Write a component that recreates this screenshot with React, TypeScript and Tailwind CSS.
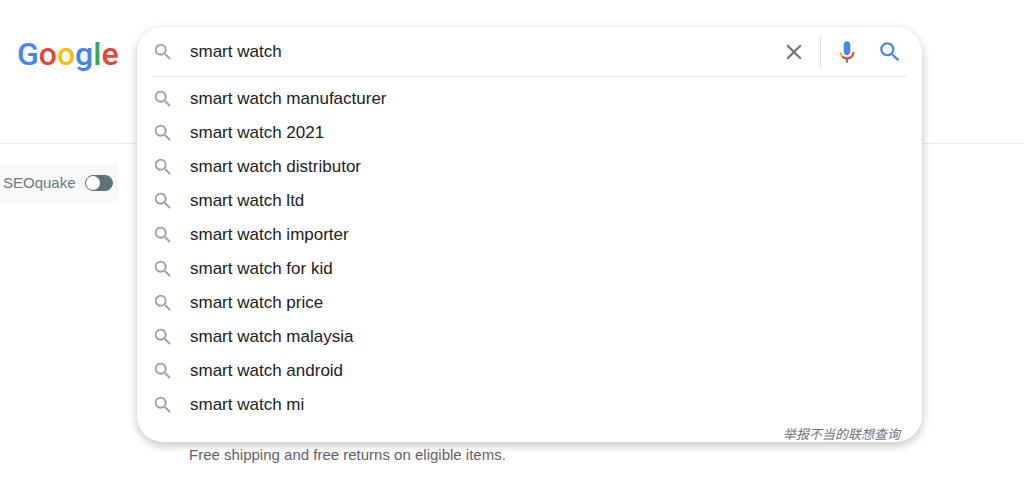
import React, { useState } from 'react';

const SUGGESTIONS = [
  'smart watch manufacturer',
  'smart watch 2021',
  'smart watch distributor',
  'smart watch ltd',
  'smart watch importer',
  'smart watch for kid',
  'smart watch price',
  'smart watch malaysia',
  'smart watch android',
  'smart watch mi',
];

function SearchIcon({ className }: { className: string }) {
  return (
    <svg viewBox="0 0 24 24" fill="currentColor" aria-hidden="true" className={className}>
      <path d="M15.5 14h-.79l-.28-.27A6.471 6.471 0 0 0 16 9.5 6.5 6.5 0 1 0 9.5 16c1.61 0 3.09-.59 4.23-1.57l.27.28v.79l5 4.99L20.49 19l-4.99-5zm-6 0C7.01 14 5 11.99 5 9.5S7.01 5 9.5 5 14 7.01 14 9.5 11.99 14 9.5 14z" />
    </svg>
  );
}

function ClearIcon() {
  return (
    <svg viewBox="0 0 24 24" fill="currentColor" aria-hidden="true" className="size-[26px]">
      <path d="M19 6.41L17.59 5 12 10.59 6.41 5 5 6.41 10.59 12 5 17.59 6.41 19 12 13.41 17.59 19 19 17.59 13.41 12z" />
    </svg>
  );
}

function MicIcon() {
  return (
    <svg viewBox="0 0 24 24" aria-hidden="true" className="size-[26px]">
      <path fill="#4285f4" d="m12 15c1.66 0 3-1.31 3-2.97v-7.02c0-1.66-1.34-3.01-3-3.01s-3 1.34-3 3.01v7.02c0 1.66 1.34 2.97 3 2.97z" />
      <path fill="#34a853" d="m11 18.08h2v3.92h-2z" />
      <path fill="#fbbc04" d="m7.05 16.87c-1.27-1.33-2.05-2.83-2.05-4.87h2c0 1.45 0.56 2.42 1.47 3.38v0.32l-1.15 1.18z" />
      <path fill="#ea4335" d="m12 16.93a4.97 5.25 0 0 1 -3.54 -1.55l-1.41 1.49c1.26 1.34 3.02 2.13 4.95 2.13 3.87 0 6.99-2.92 6.99-7h-1.99c0 2.92-2.24 4.93-5 4.93z" />
    </svg>
  );
}

function Logo() {
  return (
    <a href="#" aria-label="Google" className="font-['Roboto',sans-serif] text-[32px] leading-[54px] font-medium">
      <span className="text-[#4285f4]">G</span>
      <span className="text-[#ea4335]">o</span>
      <span className="text-[#fbbc05]">o</span>
      <span className="text-[#4285f4]">g</span>
      <span className="text-[#34a853]">l</span>
      <span className="text-[#ea4335]">e</span>
    </a>
  );
}

function SearchBox() {
  const [query, setQuery] = useState('smart watch');

  return (
    <form
      role="search"
      onSubmit={(e) => e.preventDefault()}
      className="relative z-10 mr-[102px] flex-1 rounded-[26px] bg-white shadow-[0_3px_10px_rgba(32,33,36,0.28)]"
    >
      <div className="mx-[15px] flex h-[50px] items-center border-b border-[#e8eaed]">
        <SearchIcon className="size-[22px] shrink-0 text-[#9aa0a6]" />
        <input
          type="text"
          aria-label="Search"
          value={query}
          onChange={(e) => setQuery(e.target.value)}
          className="ml-4 min-w-0 flex-1 bg-transparent text-[17px] text-[#202124] outline-none"
        />
        <button type="button" aria-label="Clear" onClick={() => setQuery('')} className="text-[#70757a]">
          <ClearIcon />
        </button>
        <span className="mx-[13px] h-8 w-px bg-[#dadce0]" />
        <button type="button" aria-label="Search by voice">
          <MicIcon />
        </button>
        <button type="submit" aria-label="Search" className="mr-1 ml-[17px] text-[#4285f4]">
          <SearchIcon className="size-[26px]" />
        </button>
      </div>

      {/* Suggestions */}
      <ul className="pt-[5px]">
        {SUGGESTIONS.map((text) => (
          <li key={text}>
            <button
              type="button"
              onClick={() => setQuery(text)}
              className="flex h-[34px] w-full items-center gap-4 px-[15px] text-left text-[17px] text-[#202124] hover:bg-gray-100"
            >
              <SearchIcon className="size-[22px] shrink-0 text-[#9aa0a6]" />
              {text}
            </button>
          </li>
        ))}
      </ul>
      <div className="flex justify-end pt-[6px] pr-[22px]">
        <a href="#" className="font-['Liberation_Sans','Noto_Sans_CJK_SC',sans-serif] text-[13px] leading-[14px] text-[#70757a] italic">
          举报不当的联想查询
        </a>
      </div>
    </form>
  );
}

function App() {
  const [enabled, setEnabled] = useState(false);

  return (
    <div className="min-h-screen bg-white font-['Liberation_Sans',Arial,sans-serif]">
      {/* The search box hangs over the header's lower edge */}
      <header className="flex h-[144px] items-start border-b border-[#ebebeb] pt-[27px]">
        <div className="w-[137px] shrink-0 pl-[17px]">
          <Logo />
        </div>
        <SearchBox />
      </header>

      <main className="pt-[19px]">
        <label className="flex h-10 w-[118px] items-center gap-2 bg-[#f8f8f8] pl-[3px] text-[15px] text-[#6b7c80]">
          SEOquake
          <input
            type="checkbox"
            role="switch"
            checked={enabled}
            onChange={(e) => setEnabled(e.target.checked)}
            className="ml-auto mr-[5px] h-4 w-7 shrink-0 appearance-none rounded-full border border-[#5f7278] bg-[#5f7278] before:block before:size-[14px] before:rounded-full before:bg-white checked:before:ml-3"
          />
        </label>
        <p className="mt-[240px] pl-[189px] text-[15px] leading-6 text-[#5f6368]">
          Free shipping and free returns on eligible items.
        </p>
      </main>
    </div>
  );
}

export default App;
